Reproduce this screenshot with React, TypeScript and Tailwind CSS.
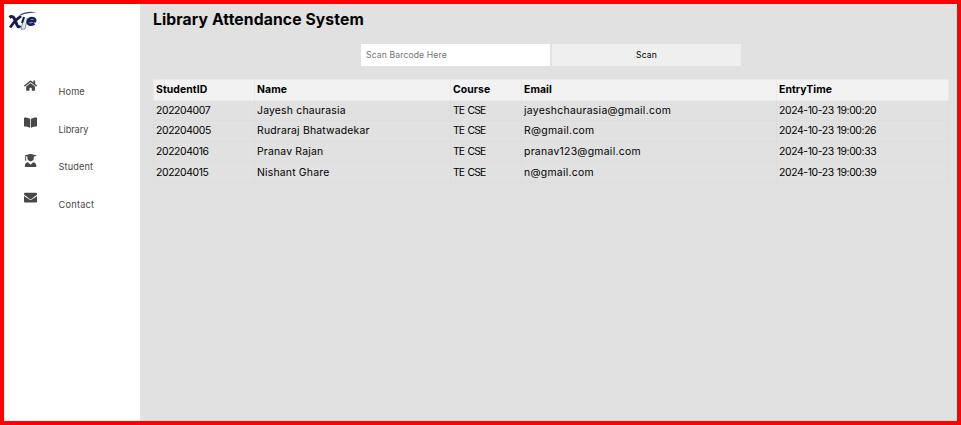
import { FaBookOpen, FaEnvelope, FaHome, FaUserGraduate } from "react-icons/fa";

const nav = [
  { label: "Home", icon: FaHome, track: "tracking-[0.15px]" },
  { label: "Library", icon: FaBookOpen, track: "tracking-[-0.1px]" },
  { label: "Student", icon: FaUserGraduate, track: "tracking-[0.12px]" },
  { label: "Contact", icon: FaEnvelope, track: "tracking-[0.25px]" },
];

const headers = ["StudentID", "Name", "Course", "Email", "EntryTime"];

const columnTracking = [
  "tracking-[-0.38px]",
  "tracking-[0.2px]",
  "tracking-[-0.9px] [word-spacing:1.3px]",
  "tracking-[0.29px]",
  "tracking-[-0.38px] [word-spacing:0.4px]",
];

const rows = [
  ["202204007", "Jayesh chaurasia", "TE CSE", "jayeshchaurasia@gmail.com", "2024-10-23 19:00:20"],
  ["202204005", "Rudraraj Bhatwadekar", "TE CSE", "R@gmail.com", "2024-10-23 19:00:26"],
  ["202204016", "Pranav Rajan", "TE CSE", "pranav123@gmail.com", "2024-10-23 19:00:33"],
  ["202204015", "Nishant Ghare", "TE CSE", "n@gmail.com", "2024-10-23 19:00:39"],
];

function Logo() {
  return (
    <svg className="block h-[24px] w-[32px]" viewBox="0 0 32 24">
      <path d="M1.5 9.5 C4 7.5 6 9 7 12 L9 17 C10 19.5 11.5 19 12 17.5" fill="none" stroke="#151b50" strokeWidth="3" />
      <path d="M13 8 L7.5 12.5 L2 19.5" fill="none" stroke="#151b50" strokeWidth="2.8" />
      <path d="M16 9 L13 21 L17 21 L19.5 10" fill="#dce8ee" stroke="#5d7d91" strokeWidth="0.8" />
      <path d="M16 9 L14 15" stroke="#151b50" strokeWidth="2" />
      <path d="M20 13.2 L27 13.2 C28.5 10 22.5 9 20.5 11.7 C18.5 15.5 20.5 18 26.5 15.8" fill="none" stroke="#17205b" strokeWidth="2.6" />
      <path d="M12 6.5 C17 4 22 3.2 28.5 4.4 C23 4.4 17.5 5.2 13 7.3 Z" fill="#39466e" />
    </svg>
  );
}

export default function App() {
  return (
    <div className="flex h-[425px] w-[961px] border-4 border-[#ff0000] bg-[#e1e1e1] font-['Inter',sans-serif] text-black">
      <aside className="flex w-[136px] shrink-0 flex-col bg-white">
        <div className="h-[62.2px] pt-[4px] pl-[4px]"><Logo /></div>
        <nav>
          {nav.map(({ label, icon: Icon, track }) => (
            <div key={label} className="flex h-[37.6px] text-[#484848]">
              <div className="flex h-[38px] w-[53px] items-center justify-center"><Icon className="text-[13.2px]" /></div>
              <span className={`pt-[18.8px] pl-[1.5px] text-[9.2px] leading-[13px] ${track}`}>{label}</span>
            </div>
          ))}
        </nav>
      </aside>
      <main className="flex min-w-0 flex-1 flex-col pr-[9px] pl-[13px]">
        <h1 className="h-[39.5px] pt-[5px] text-[15.7px] leading-[22px] font-bold tracking-[0.11px] whitespace-nowrap">Library Attendance System</h1>
        <div className="flex h-[35.5px] justify-center gap-[2px] pl-[1px]">
          <input placeholder="Scan Barcode Here" className="h-[22.8px] w-[189px] bg-white px-[5px] text-[8.6px] tracking-[0.13px] outline-none placeholder:text-[#757575]" />
          <button className="h-[22.8px] w-[189px] bg-[#efefef] pt-px text-[8.6px] tracking-[0.1px]">Scan</button>
        </div>
        <table className="w-[796px] table-fixed border-collapse text-left text-[10.4px] leading-[15px]">
          <colgroup>
            <col className="w-[101px]" />
            <col className="w-[196px]" />
            <col className="w-[71px]" />
            <col className="w-[255px]" />
            <col />
          </colgroup>
          <thead>
            <tr className="h-[20.5px] bg-[#f2f2f2]">
              {headers.map((h) => <th key={h} className="border border-[#e9e9e9] px-[2px] py-0 font-bold tracking-[0.09px]">{h}</th>)}
            </tr>
          </thead>
          <tbody>
            {rows.map((row) => (
              <tr key={row[0]} className="h-[20.6px]">
                {row.map((cell, i) => <td key={i} className={`border border-[#dddddd] px-[2px] py-0 whitespace-nowrap ${columnTracking[i]}`}>{cell}</td>)}
              </tr>
            ))}
          </tbody>
        </table>
      </main>
    </div>
  );
}
